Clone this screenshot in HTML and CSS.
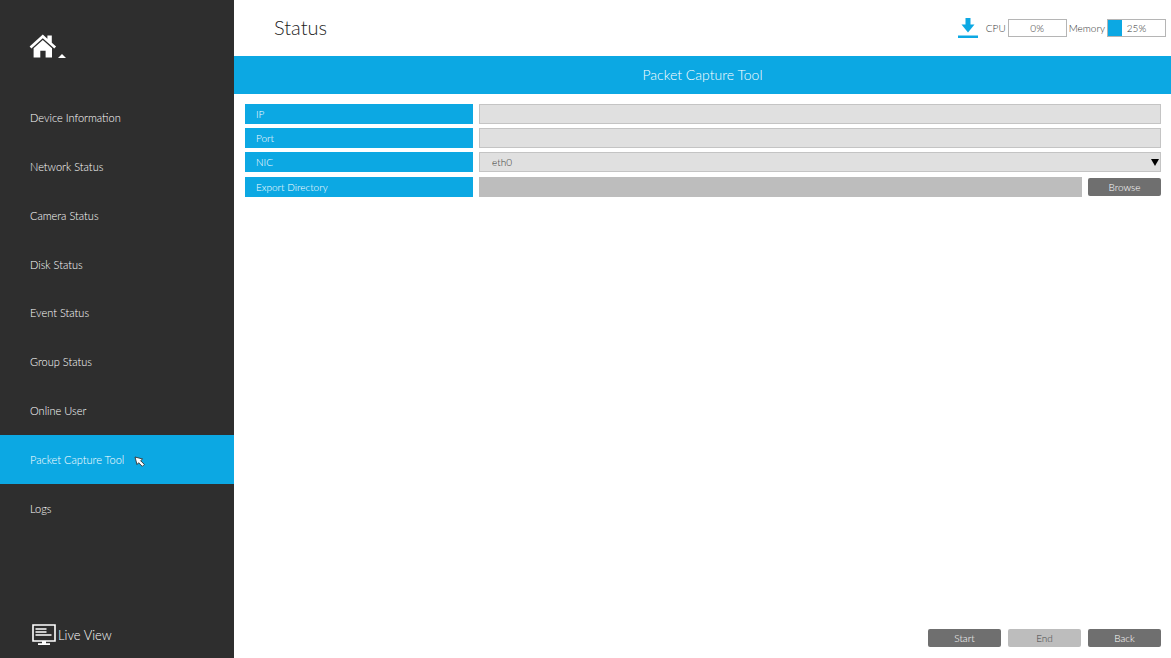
FILE: index.html
```html
<!DOCTYPE html>
<html lang="en">
<head>
<meta charset="utf-8">
<title>Status</title>
<link rel="stylesheet" href="styles.css">
</head>
<body>
<div class="app">
  <aside class="sidebar">
    <a class="home" href="#" aria-label="Home">
      <svg class="home-icon" viewBox="0 0 38 26" width="38" height="26" fill="#fff">
        <path d="M.6 12.600 13.800.6l4.600 4.100V1.400h4.400v7.300l4.300 3.900-1.800 1.900L13.800 4.200 2.400 14.500z"/>
        <path d="M13.800 6 23 14.300V23.400h-6.400v-6.600h-5.300v6.600H4.600V14.300z"/>
        <path d="M29 24l4-4 4 4z"/>
      </svg>
    </a>
    <nav class="nav">
      <a class="nav-item" href="#">Device Information</a>
      <a class="nav-item" href="#">Network Status</a>
      <a class="nav-item" href="#">Camera Status</a>
      <a class="nav-item" href="#">Disk Status</a>
      <a class="nav-item" href="#">Event Status</a>
      <a class="nav-item" href="#">Group Status</a>
      <a class="nav-item" href="#">Online User</a>
      <a class="nav-item active" href="#" aria-current="page">Packet Capture Tool
        <svg class="cursor" viewBox="0 0 11 11" width="11" height="11"><path d="M1 1l7.600 2-2 1.700 3.700 3.700-2 2-3.700-3.700L3 8.600z" fill="#fff" stroke="#333" stroke-width=".9" stroke-linejoin="round"/></svg>
      </a>
      <a class="nav-item" href="#">Logs</a>
    </nav>
    <a class="live" href="#">
      <svg viewBox="0 0 24 21" width="24" height="21">
        <path d="M1 1h22v16H1z" fill="none" stroke="#fff" stroke-width="1.600"/>
        <path d="M3.500 5h11M3.500 8h11M3.500 11h16" stroke="#fff" stroke-width="1.400"/>
        <path d="M10 17h4v2.200h4V21H6v-1.800h4z" fill="#fff"/>
      </svg>
      <span>Live View</span>
    </a>
  </aside>
  <main class="main">
    <header class="topbar">
      <h1 class="title">Status</h1>
      <div class="meters">
        <button class="download" type="button" aria-label="Download">
          <svg viewBox="0 0 20 20" width="20" height="20" fill="#0ca8e3"><path d="M7.500 0h5v6.500h4L10 14.500 3.500 6.500h4zM0 17.500h20V20H0z"/></svg>
        </button>
        <span class="meter-label">CPU</span>
        <div class="meter"><span class="meter-value">0%</span></div>
        <span class="meter-label">Memory</span>
        <div class="meter"><span class="meter-fill" style="width:25%"></span><span class="meter-value">25%</span></div>
      </div>
    </header>
    <h2 class="banner">Packet Capture Tool</h2>
    <form class="form">
      <div class="row"><label class="label" for="ip">IP</label><input class="field" id="ip" type="text"></div>
      <div class="row"><label class="label" for="port">Port</label><input class="field" id="port" type="text"></div>
      <div class="row">
        <label class="label" for="nic">NIC</label>
        <div class="select-wrap">
          <select class="field select" id="nic"><option>eth0</option></select>
          <svg class="arrow" viewBox="0 0 8 7" width="8" height="7"><path d="M0 0h8L4 7z"/></svg>
        </div>
      </div>
      <div class="row directory">
        <label class="label" for="dir">Export Directory</label>
        <input class="field readonly" id="dir" type="text" readonly>
        <button class="btn" type="button">Browse</button>
      </div>
    </form>
    <footer class="actions">
      <button class="btn" type="button">Start</button>
      <button class="btn" type="button" disabled>End</button>
      <button class="btn" type="button">Back</button>
    </footer>
  </main>
</div>
</body>
</html>
```
FILE: styles.css
```css
* { box-sizing: border-box; }
body {
  margin: 0;
  font-family: "Century Gothic", Lato, sans-serif;
  font-size: 11px;
  font-weight: 300;
  color: #333;
  background: #fff;
}
a { color: inherit; text-decoration: none; }
button, input, select { font: inherit; }
svg { display: block; flex: none; }

.app { display: flex; min-height: 100vh; }

.sidebar {
  display: flex;
  flex-direction: column;
  flex: none;
  width: 234px;
  background: #2e2e2e;
  color: #fff;
}
.home { height: 94px; padding: 34px 0 0 29px; }
.nav { display: grid; grid-auto-rows: 1fr; height: 439px; }
.nav-item { display: flex; align-items: center; gap: 10px; padding: 0 0 1px 30px; }
.nav-item.active { background: #0ca8e3; }
.cursor { margin-top: 4px; }
.live {
  display: flex;
  align-items: center;
  gap: 2px;
  margin-top: auto;
  padding: 0 0 13px 32px;
  font-size: 13px;
}

.main { display: flex; flex-direction: column; flex: 1; min-width: 0; }
.topbar {
  display: flex;
  align-items: center;
  justify-content: space-between;
  height: 56px;
  padding: 0 5px 0 40px;
}
.title { margin: 0; padding-bottom: 2px; font-size: 20px; font-weight: 300; color: #222; }
.meters { display: flex; align-items: center; gap: 2px; font-size: 10px; }
.download { margin: 0 6px 1px 0; padding: 0; border: 0; background: none; }
.meter {
  display: flex;
  position: relative;
  width: 59px;
  height: 18px;
  border: 1px solid #b5b5b5;
}
.meter-fill { background: #0ca8e3; }
.meter-value { position: absolute; inset: 0; line-height: 16px; text-align: center; }
.banner {
  height: 38px;
  margin: 0;
  background: #0ca8e3;
  color: #fff;
  font-size: 14px;
  font-weight: 300;
  line-height: 38px;
  text-align: center;
}

.form { display: flex; flex-direction: column; gap: 4px; padding: 10px 10px 0 11px; }
.row { display: flex; align-items: center; gap: 6px; font-size: 10px; }
.label {
  flex: none;
  width: 228px;
  height: 20px;
  padding-left: 11px;
  background: #0ca8e3;
  color: #fff;
  line-height: 20px;
}
.field {
  flex: 1;
  min-width: 0;
  height: 20px;
  padding: 0 12px 1px;
  border: 1px solid #c4c4c4;
  border-radius: 0;
  background: #e0e0e0;
  color: #333;
}
.readonly { border-color: #bdbdbd; background: #bdbdbd; }
.select-wrap { display: flex; position: relative; flex: 1; }
.select { appearance: none; }
.arrow { position: absolute; right: 2px; top: 7px; pointer-events: none; }
.directory { margin-top: 1px; }
.btn {
  flex: none;
  width: 73px;
  height: 18px;
  padding: 0 0 1px;
  border: 0;
  border-radius: 2px;
  background: #6f6f6f;
  color: #fff;
  font-size: 10px;
}
.btn:disabled { background: #bdbdbd; color: #444; }
.actions {
  display: flex;
  justify-content: flex-end;
  gap: 7px;
  margin-top: auto;
  padding: 0 10px 11px;
}
```
